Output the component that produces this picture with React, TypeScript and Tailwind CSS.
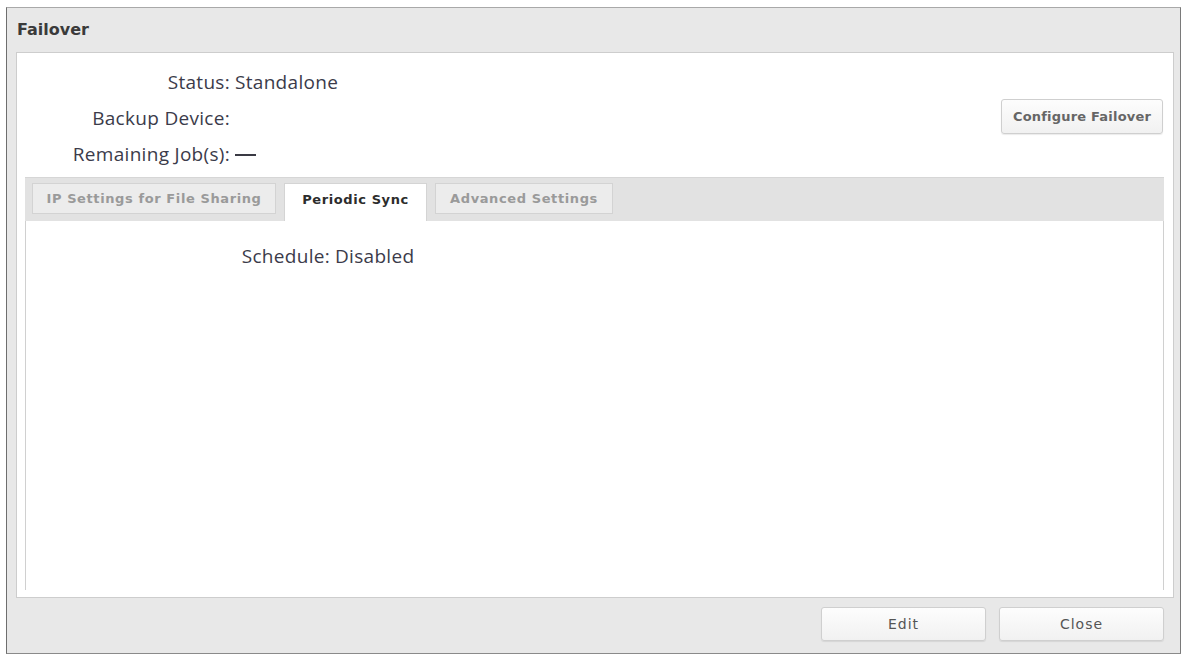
import React from 'react';

const labelFont = { fontFamily: '"Open Sans", "Noto Sans", sans-serif' };

interface InfoRow {
  label: string;
  value?: React.ReactNode;
}

const rows: InfoRow[] = [
  { label: 'Status:', value: 'Standalone' },
  { label: 'Backup Device:' },
  {
    label: 'Remaining Job(s):',
    value: <span className="inline-block w-[21px] h-[2px] bg-[#3a3a44] align-middle mt-[2px]" />,
  },
];

const tabs = [
  { name: 'IP Settings for File Sharing', width: 'w-[244px]' },
  { name: 'Periodic Sync', width: 'w-[143px]', active: true },
  { name: 'Advanced Settings', width: 'w-[178px]' },
];

function DialogButton({ label, className }: { label: string; className: string }) {
  return (
    <button
      type="button"
      className={`rounded-[3px] border border-[#cfcfcf] bg-gradient-to-b from-[#fdfdfd] to-[#f1f1f1] font-[DejaVu_Sans,Verdana,sans-serif] shadow-[0_1px_1px_rgba(0,0,0,0.08)] ${className}`}
    >
      {label}
    </button>
  );
}

export default function App() {
  return (
    <div className="w-[1187px] h-[657px] bg-white pt-[7px] pl-[6px] pr-[6px] pb-[3px]">
      <div className="h-full flex flex-col bg-[#e8e8e8] border border-[#a9a9a9] border-l-[#6e6e6e] border-r-[#7a7a7a] border-b-[#8a8a8a]">
        <div className="h-[44px] flex items-center pl-[10px] text-[16px] font-bold text-[#3a3a3a] font-[DejaVu_Sans,Verdana,sans-serif]">
          Failover
        </div>

        <div className="flex-1 flex flex-col ml-[9px] mr-[6px] bg-white border border-[#cdcdcd]">
          <div className="flex justify-between h-[124px]">
            <div className="pt-[11px]" style={labelFont}>
              {rows.map((row) => (
                <div key={row.label} className="h-[36px] flex items-center text-[19px] tracking-[0.3px] text-[#3b3b4a]">
                  <div className="w-[213px] text-right">{row.label}</div>
                  <div className="pl-[5px] flex items-center">{row.value}</div>
                </div>
              ))}
            </div>
            <div className="pt-[46px] pr-[10px]">
              <DialogButton
                label="Configure Failover"
                className="w-[162px] h-[35px] text-[13px] font-bold tracking-[0.2px] text-[#666]"
              />
            </div>
          </div>

          <div className="flex-1 flex flex-col ml-[8px] mr-[9px] mb-[7px]">
            <div className="h-[44px] flex items-end gap-[8px] pl-[7px] bg-[#e2e2e2] border-t border-[#d6d6d6]">
              {tabs.map((tab) =>
                tab.active ? (
                  <div
                    key={tab.name}
                    className={`${tab.width} h-[38px] pb-[6px] flex items-center justify-center bg-white border border-b-0 border-[#d4d4d4] text-[13px] tracking-[0.6px] font-bold text-[#2c2c2c] font-[DejaVu_Sans,Verdana,sans-serif]`}
                  >
                    {tab.name}
                  </div>
                ) : (
                  <div
                    key={tab.name}
                    className={`${tab.width} h-[31px] mb-[7px] flex items-center justify-center bg-[#ececec] border border-[#d3d3d3] text-[13px] tracking-[0.6px] font-bold text-[#9a9a9a] font-[DejaVu_Sans,Verdana,sans-serif]`}
                  >
                    {tab.name}
                  </div>
                )
              )}
            </div>
            <div className="flex-1 border-l border-r border-[#d0d0d0] pt-[17px]" style={labelFont}>
              <div className="h-[36px] flex items-center text-[19px] tracking-[0.3px] text-[#3b3b4a]">
                <div className="w-[304px] text-right">Schedule:</div>
                <div className="pl-[5px]">Disabled</div>
              </div>
            </div>
          </div>
        </div>

        <div className="h-[55px] flex justify-end items-start gap-[13px] pt-[9px] pr-[16px]">
          <DialogButton label="Edit" className="w-[165px] h-[34px] text-[14px] tracking-[1px] text-[#555]" />
          <DialogButton label="Close" className="w-[165px] h-[34px] text-[14px] tracking-[1px] text-[#555]" />
        </div>
      </div>
    </div>
  );
}
